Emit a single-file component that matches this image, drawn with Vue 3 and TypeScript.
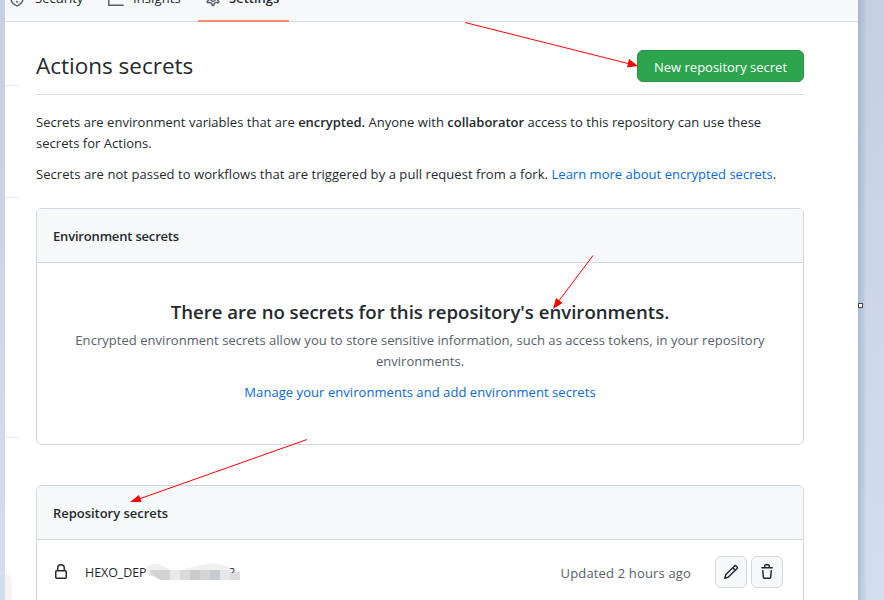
<script setup lang="ts">
interface Tab {
  label: string
  icon: 'shield' | 'graph' | 'gear'
  active?: boolean
}

const tabs: Tab[] = [
  { label: 'Security', icon: 'shield' },
  { label: 'Insights', icon: 'graph' },
  { label: 'Settings', icon: 'gear', active: true },
]

const mosaic: string[] = ['#d4d4d5', '#d3d3d3', '#e8e9eb', '#d9dadc', '#cbcbcc', '#d5d5d6', '#c8cbd1', '#e6e7e9', '#dcdcdd']

const pencil =
  'M11.013 1.427a1.75 1.75 0 012.474 0l1.086 1.086a1.75 1.75 0 010 2.474l-8.61 8.61c-.21.21-.47.364-.756.445l-3.251.93a.75.75 0 01-.927-.928l.929-3.25a1.75 1.75 0 01.445-.758l8.61-8.61zm1.414 1.06a.25.25 0 00-.354 0L10.811 3.75l1.439 1.44 1.263-1.263a.25.25 0 000-.354l-1.086-1.086zM11.189 6.25L9.75 4.81l-6.286 6.287a.25.25 0 00-.064.108l-.558 1.953 1.953-.558a.249.249 0 00.108-.064l6.286-6.286z'
const trash =
  'M6.5 1.75a.25.25 0 01.25-.25h2.5a.25.25 0 01.25.25V3h-3V1.75zm4.5 0V3h2.25a.75.75 0 010 1.5H2.75a.75.75 0 010-1.5H5V1.75C5 .784 5.784 0 6.75 0h2.5C10.216 0 11 .784 11 1.75zM4.496 6.675a.75.75 0 10-1.492.15l.66 6.6A1.75 1.75 0 005.405 15h5.19c.9 0 1.652-.681 1.741-1.576l.66-6.6a.75.75 0 00-1.492-.149l-.66 6.6a.25.25 0 01-.249.225h-5.19a.25.25 0 01-.249-.225l-.66-6.6z'
const lock =
  'M4 4v2h-.25A1.75 1.75 0 002 7.75v5.5c0 .966.784 1.75 1.75 1.75h8.5A1.75 1.75 0 0014 13.25v-5.5A1.75 1.75 0 0012.25 6H12V4a4 4 0 10-8 0zm6.5 2V4a2.5 2.5 0 10-5 0v2h5zM12 7.5h.25a.25.25 0 01.25.25v5.5a.25.25 0 01-.25.25h-8.5a.25.25 0 01-.25-.25v-5.5a.25.25 0 01.25-.25H12z'
const gear =
  'M7.429 1.525a6.593 6.593 0 011.142 0c.036.003.108.036.137.146l.289 1.105c.147.56.55.967.997 1.189.174.086.341.183.501.29.417.278.97.423 1.53.27l1.102-.303c.11-.03.175.016.195.046.219.31.41.641.573.989.014.031.022.11-.059.19l-.815.806c-.411.406-.562.957-.53 1.456a4.588 4.588 0 010 .582c-.032.499.119 1.05.53 1.456l.815.806c.08.08.073.159.059.19a6.494 6.494 0 01-.573.99c-.02.029-.086.074-.195.045l-1.103-.303c-.559-.153-1.112-.008-1.529.27-.16.107-.327.204-.5.29-.449.222-.851.628-.998 1.189l-.289 1.105c-.029.11-.101.143-.137.146a6.613 6.613 0 01-1.142 0c-.036-.003-.108-.037-.137-.146l-.289-1.105c-.147-.56-.55-.967-.997-1.189a4.502 4.502 0 01-.501-.29c-.417-.278-.97-.423-1.53-.27l-1.102.303c-.11.03-.175-.016-.195-.046a6.492 6.492 0 01-.573-.989c-.014-.031-.022-.11.059-.19l.815-.806c.411-.406.562-.957.53-1.456a4.587 4.587 0 010-.582c.032-.499-.119-1.05-.53-1.456l-.815-.806c-.08-.08-.073-.159-.059-.19a6.44 6.44 0 01.573-.99c.02-.029.086-.075.195-.045l1.103.303c.559.153 1.112.008 1.529-.27.16-.107.327-.204.5-.29.449-.222.851-.628.998-1.189l.289-1.105c.029-.11.101-.143.137-.146z'
</script>

<template>
  <div class="desktop">
    <div class="edge-left"></div>
    <div class="window">
      <nav class="tabs">
        <a v-for="tab in tabs" :key="tab.label" class="tab" :class="[tab.icon, { active: tab.active }]">
          <svg class="icon line" width="16" height="16" viewBox="0 0 16 16">
            <template v-if="tab.icon === 'shield'">
              <path d="M8 .9L2 2.9v4.4c0 3.8 2.4 6.1 6 7.6 3.6-1.5 6-3.8 6-7.6V2.9z" />
              <circle class="dot" cx="8" cy="10.7" r="1" />
            </template>
            <path v-else-if="tab.icon === 'graph'" d="M.75 1v13.25h15M3.5 8.5l3.5-3.5 3 3 5-5" />
            <template v-else>
              <path :d="gear" />
              <circle cx="8" cy="8" r="2.25" />
            </template>
          </svg>
          <span>{{ tab.label }}</span>
        </a>
      </nav>
      <div class="body">
        <aside class="side">
          <i class="rule r1"></i>
          <i class="rule r2"></i>
          <i class="rule r3"></i>
          <i class="side-box"></i>
        </aside>
        <main class="main">
          <header class="subhead">
            <h2>Actions secrets</h2>
            <button class="primary">New repository secret</button>
          </header>
          <p class="intro first">
            Secrets are environment variables that are <b>encrypted.</b> Anyone with <b>collaborator</b> access to this
            repository can use these<br />secrets for Actions.
          </p>
          <p class="intro second">
            Secrets are not passed to workflows that are triggered by a pull request from a fork.
            <a>Learn more about encrypted secrets</a>.
          </p>

          <section class="box env">
            <div class="box-head">Environment secrets</div>
            <div class="blank">
              <h3>There are no secrets for this repository's environments.</h3>
              <p>
                Encrypted environment secrets allow you to store sensitive information, such as access tokens, in your
                repository<br />environments.
              </p>
              <a>Manage your environments and add environment secrets</a>
            </div>
          </section>

          <section class="box repo">
            <div class="box-head">Repository secrets</div>
            <div class="row">
              <svg class="icon" width="16" height="16" viewBox="0 0 16 16"><path fill-rule="evenodd" :d="lock" /></svg>
              <div class="name">
                <span>HEXO_DEP</span>
                <svg class="mask" width="96" height="20" viewBox="0 0 96 20">
                  <path d="M0 8C0 1 9 0 15 2L26 7 36 7C48 3 64-1 74 1L84 5V9H94V16H14C6 16 0 12 0 8z" fill="#f0f0f0" />
                  <rect v-for="(c, i) in mosaic" :key="i" :x="4 + i * 10" y="7" width="10" height="10" :fill="c" />
                  <path d="M4 11V17H14z" fill="#fff" />
                  <rect class="clear" x="84" y="3" width="10" height="6" />
                  <text x="83.5" y="14" class="remnant">?</text>
                  <rect x="84" y="10" width="10" height="7" fill="#dcdcdd" />
                </svg>
              </div>
              <span class="updated">Updated 2 hours ago</span>
              <button class="tool">
                <svg class="icon" width="16" height="16" viewBox="0 0 16 16"><path fill-rule="evenodd" :d="pencil" /></svg>
              </button>
              <button class="tool">
                <svg class="icon" width="16" height="16" viewBox="0 0 16 16"><path fill-rule="evenodd" :d="trash" /></svg>
              </button>
            </div>
          </section>
        </main>
      </div>
    </div>
    <div class="edge-right"></div>

    <svg class="annotations" width="884" height="600" viewBox="0 0 884 600">
      <g stroke="#f00" stroke-width="1">
        <path d="M465 22.5L630 64M593 255.5L558 302M307 439.5L139 499" />
      </g>
      <path d="M638 66L627 67.5 629 59zM553 309L556 298 562.5 303zM130 502L139 495 141.5 502z" fill="#f00" />
      <rect x="858.5" y="303.5" width="4" height="4" fill="#fff" stroke="#444" />
    </svg>
  </div>
</template>

<style>
body {
  margin: 0;
  overflow: hidden;
}
</style>

<style scoped>
.desktop {
  position: relative;
  display: flex;
  width: 884px;
  height: 600px;
  overflow: hidden;
  font-family: 'Open Sans', 'Noto Sans', sans-serif;
  font-size: 13px;
  line-height: 21px;
  color: #24292e;
}
.edge-left {
  width: 5px;
  background: linear-gradient(#c5cfe1, #d4deee);
}
.edge-right {
  width: 26px;
  background: linear-gradient(90deg, rgba(120, 145, 175, 0.4), rgba(120, 145, 175, 0.16) 6px, transparent 9px),
    linear-gradient(#c5cfe1, #d4deee);
}
.window {
  display: flex;
  flex-direction: column;
  width: 853px;
  background: #fff;
}
.tabs {
  display: flex;
  align-items: flex-end;
  box-sizing: border-box;
  flex: none;
  height: 22px;
  overflow: hidden;
  background: linear-gradient(#d8dde3, #d8dde3) bottom / 100% 1px no-repeat #f6f8fa;
}
.tab {
  display: flex;
  align-items: center;
  gap: 8px;
  box-sizing: border-box;
  flex: none;
  height: 48px;
  padding-top: 3px;
  border-bottom: 2px solid transparent;
  color: #24292e;
}
.tab.shield {
  width: 98px;
  padding-left: 4px;
  gap: 10px;
}
.tab.graph {
  width: 95px;
  padding-left: 5px;
  gap: 9px;
  letter-spacing: 0.1px;
}
.tab.gear {
  width: 91px;
  padding-left: 7px;
}
.tab.active {
  border-color: #fd8c73;
  font-weight: 600;
}
.icon {
  display: block;
  flex: none;
  fill: #24292e;
}
.icon.line {
  fill: none;
  stroke: #57606a;
  stroke-width: 1.5;
}
.icon.line .dot {
  fill: #57606a;
  stroke: none;
}
.body {
  display: flex;
  flex: 1;
  min-height: 0;
}
.side {
  display: flex;
  flex-direction: column;
  width: 15px;
  margin-right: 16px;
}
.rule {
  height: 1px;
  background: #e8eaed;
}
.r1 {
  margin-top: 63px;
}
.r2 {
  margin-top: 111px;
}
.r3 {
  margin-top: 239px;
}
.side-box {
  width: 7px;
  height: 30px;
  margin-top: 136px;
  border-radius: 0 6px 0 0;
  background: #f3f4f6;
}
.main {
  width: 768px;
  padding-top: 28px;
}
.subhead {
  display: flex;
  justify-content: space-between;
  height: 44px;
  border-bottom: 1px solid #d8dee4;
}
h2 {
  margin: 0;
  font-size: 22.5px;
  font-weight: 400;
  line-height: 32px;
}
button {
  box-sizing: border-box;
  border-radius: 6px;
  font: inherit;
}
.primary {
  width: 167px;
  height: 32px;
  padding: 2px 0 0;
  border: 1px solid #2a9147;
  background: #2da44e;
  color: #fff;
  white-space: nowrap;
}
a {
  color: #0969da;
}
.intro {
  margin: 0;
  white-space: nowrap;
}
b {
  font-weight: 600;
  letter-spacing: -0.03px;
}
.first {
  margin-top: 17px;
  letter-spacing: 0.03px;
}
.second {
  margin-top: 10px;
  letter-spacing: 0.06px;
}
.second a {
  letter-spacing: 0.02px;
}
.box {
  box-sizing: border-box;
  border: 1px solid #d0d7de;
  border-radius: 6px;
  overflow: hidden;
}
.env {
  height: 237px;
  margin-top: 23px;
}
.repo {
  height: 180px;
  margin-top: 40px;
}
.box-head {
  height: 20px;
  padding: 17px 16px 16px;
  border-bottom: 1px solid #d0d7de;
  background: #f6f8fa;
  font-weight: 600;
  letter-spacing: -0.03px;
}
.env .box-head {
  letter-spacing: -0.18px;
}
.blank {
  padding-top: 34px;
  text-align: center;
  white-space: nowrap;
  letter-spacing: 0.06px;
}
h3 {
  margin: 0;
  font-size: 18.6px;
  font-weight: 600;
  line-height: 30px;
  letter-spacing: 0;
}
.blank p {
  margin: 3px 0 10px;
  color: #57606a;
  letter-spacing: 0.04px;
}
.row {
  display: flex;
  align-items: center;
  height: 32px;
  padding: 16px 20px 16px 16px;
}
.name {
  position: relative;
  display: flex;
  flex: 1;
  margin-left: 16px;
  font-size: 12.4px;
}
.mask {
  position: absolute;
  left: 60.5px;
  top: 1px;
}
.clear {
  fill: #fff;
}
.remnant {
  font-size: 12px;
  fill: #24292e;
}
.updated {
  margin-right: 24px;
  padding-top: 2px;
  color: #57606a;
  letter-spacing: 0.16px;
}
.tool {
  display: flex;
  align-items: center;
  justify-content: center;
  width: 32px;
  height: 32px;
  padding: 0;
  border: 1px solid #d5d8da;
  background: #f6f8fa;
}
.tool + .tool {
  margin-left: 4px;
}
.annotations {
  position: absolute;
  left: 0;
  top: 0;
  pointer-events: none;
}
</style>
